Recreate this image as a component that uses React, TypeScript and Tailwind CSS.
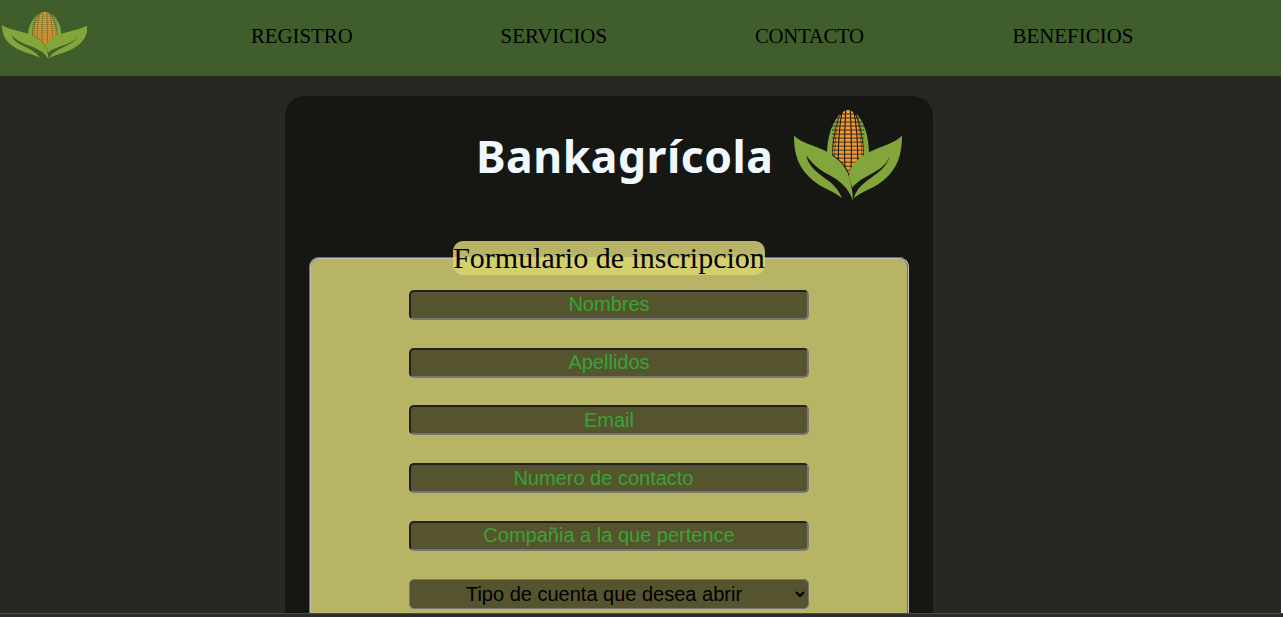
import React from "react";

const LEAF = "#82a63c";
const GRAIN = "#f09a36";

function Corn({ className, gap }: { className: string; gap: string }) {
  const rows = Array.from({ length: 15 }, (_, i) => 57 + i * 12);
  return (
    <svg className={className} viewBox="42 45 324 272" preserveAspectRatio="none" aria-hidden="true">
      <path d="M182 55C158 78 142 122 141 176L156 184C158 130 166 88 182 55Z" fill={LEAF} />
      <path d="M228 55C252 78 266 122 267 174L252 182C250 130 242 88 228 55Z" fill={LEAF} />
      <path d="M204 45C185 44 173 70 166 112C161 140 158 165 158 186C178 197 194 217 204 241C212 219 231 197 250 183C250 160 247 138 242 112C235 70 222 44 204 45Z" fill={GRAIN} />
      <g stroke={gap} fill="none" strokeWidth="2.4">
        {rows.map((y) => (
          <path key={y} d={`M156 ${y}H253`} />
        ))}
        <path d="M197 45C194 100 193 170 195 225M211 45C214 100 215 170 213 222M186 50C178 95 174 145 175 205M222 50C230 95 234 145 233 205" strokeWidth="3.2" />
        <path d="M176 70C168 105 164 150 163 192M232 70C240 105 245 150 246 190" strokeWidth="1.5" />
      </g>
      <path d="M42 121C67 148 124 153 166 185C202 213 217 258 219 317C205 276 177 255 145 238C113 220 98 207 79 180C84 216 119 236 146 257C165 272 177 286 186 309C159 283 117 280 80 237C49 204 42 163 42 121Z" fill={LEAF} />
      <path d="M157 180C190 200 213 235 218 284" stroke={gap} strokeWidth="3" fill="none" />
      <path d="M366 121C340 150 283 155 241 187C219 204 206 225 207 246L217 277C236 252 268 241 297 222C315 209 325 197 329 180C324 216 288 236 259 258C240 273 226 288 222 309C250 283 292 280 329 237C359 204 366 163 366 121Z" fill={LEAF} />
    </svg>
  );
}

const fields = ["Nombres", "Apellidos", "Email", "Numero de contacto\u00a0\u00a0", "Compañia a la que pertence"];

export default function App() {
  return (
    <div className="flex h-[617px] w-[1283px] flex-col overflow-hidden bg-white font-['Liberation_Serif',serif] text-black">
      <header className="flex h-[76px] w-[1281px] shrink-0 bg-[#405e2c]">
        <Corn className="mt-[11.5px] ml-[1.5px] h-[47.5px] w-[85.5px] shrink-0" gap="#55702c" />
        <nav className="mt-[23px] ml-[164px] flex h-[26px] items-center text-[20.8px] leading-[26px] whitespace-nowrap">
          <a className="w-[249.5px]">REGISTRO</a>
          <a className="w-[254.5px] tracking-[0.08px]">SERVICIOS</a>
          <a className="w-[257.5px] tracking-[-0.3px]">CONTACTO</a>
          <a className="tracking-[0.08px]">BENEFICIOS</a>
        </nav>
      </header>

      <main className="min-h-0 w-[1281px] flex-1 overflow-hidden bg-[#272822] pt-5 pl-[285px]">
        <section className="h-[720px] w-[648px] rounded-t-[20px] bg-[#161712] px-6">
          <div className="flex h-[145px] pl-[167px]">
            <h1 className="mt-[29px] w-[318px] font-['Noto_Sans',sans-serif] text-[44.5px] leading-[62px] font-bold tracking-[0.5px] whitespace-nowrap text-[#f0f8ff]">
              Bankagrícola
            </h1>
            <Corn className="mt-[14px] h-[91px] w-[108px] shrink-0" gap="#161712" />
          </div>
          <fieldset className="h-[560px] w-[600px] rounded-[10px] border-2 border-[#c0c0c0] bg-[#b8b465] [border-style:groove]">
            <legend className="mx-auto h-[34px] w-[312px] rounded-[10px] bg-linear-to-b from-[#b8b465] from-[47%] to-[#d4d070] to-[47%] text-center text-[30px] leading-[34px] whitespace-nowrap">
              Formulario de inscripcion
            </legend>
            <div className="flex flex-col items-center gap-[27.75px] pt-[14.9px] font-['Liberation_Sans',sans-serif] text-[20px]">
              {fields.map((name) => (
                <input
                  key={name}
                  placeholder={name}
                  className="h-[30px] w-[400px] rounded-[5px] border-2 border-[#767676] bg-[#55542f] pb-[1.1px] text-center text-black [border-style:inset] placeholder:text-[#3ba335] placeholder:opacity-100"
                />
              ))}
              <select className="h-[30px] w-[400px] rounded-[5px] border border-[#767676] bg-[#55542f] pl-[2px] text-center text-black">
                <option>Tipo de cuenta que desea abrir</option>
              </select>
            </div>
          </fieldset>
        </section>
      </main>
      <footer className="h-1 shrink-0 border-t border-[#4b4b4b] bg-[#2b2c2d]" />
    </div>
  );
}
